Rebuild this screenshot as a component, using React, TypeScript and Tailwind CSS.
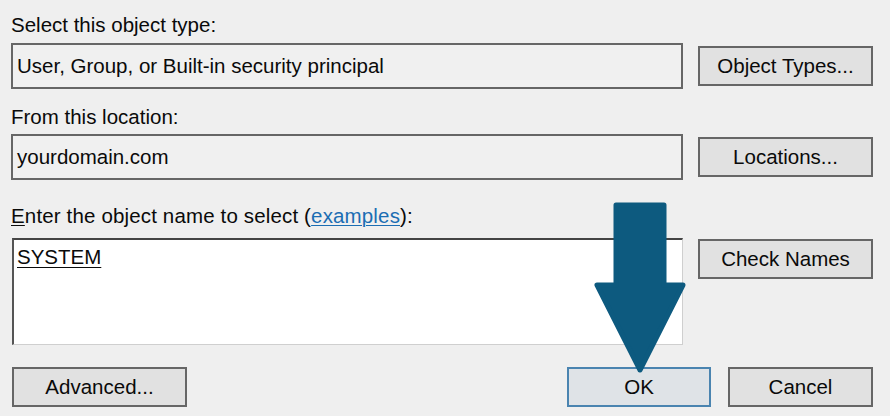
import React from "react";

const font = { fontFamily: '"Liberation Sans", Arial, sans-serif' };

function Btn({ children, primary = false, className = "" }: { children: React.ReactNode; primary?: boolean; className?: string }) {
  return (
    <div
      className={
        "flex h-[40px] items-center justify-center border-2 text-[20.5px] leading-[24px] text-[#0a0a0a] " +
        (primary ? "border-[#4a84b0] bg-[#dfe3e7] " : "border-[#666] bg-[#e1e1e1] ") +
        className
      }
    >
      {children}
    </div>
  );
}

export default function App() {
  return (
    <div className="relative h-[416px] w-[890px] overflow-hidden bg-[#efefef] text-[#0a0a0a]" style={font}>
      <div className="flex flex-col pl-[11px] pt-[13px] text-[20.5px] leading-[24px]">
        <div className="h-[24px]">Select this object type:</div>
        <div className="mt-[6px] flex items-center gap-[15px]">
          <div className="flex h-[46px] w-[672px] items-center border-2 border-[#666] bg-[#f0f0f0] pl-[4px]">
            User, Group, or Built-in security principal
          </div>
          <Btn className="w-[175px]">Object Types...</Btn>
        </div>

        <div className="mt-[16px] h-[24px]">From this location:</div>
        <div className="mt-[5px] flex items-center gap-[15px]">
          <div className="flex h-[46px] w-[672px] items-center border-2 border-[#666] bg-[#f0f0f0] pl-[4px]">
            yourdomain.com
          </div>
          <Btn className="w-[175px]">Locations...</Btn>
        </div>

        <div className="mt-[24px] h-[24px] tracking-[0.15px]">
          <span className="underline decoration-1 underline-offset-2">E</span>nter the object name to select (
          <span className="text-[#1b6db3] underline decoration-1 underline-offset-2">examples</span>):
        </div>
        <div className="mt-[10px] flex items-start gap-[15px]">
          <div className="ml-[1px] h-[107px] w-[671px] border-b border-l-2 border-r border-t-2 border-b-[#cfcfcf] border-l-[#555] border-r-[#cfcfcf] border-t-[#444] bg-white pl-[3px] pt-[5px]">
            <span className="underline decoration-1 underline-offset-[3px]">SYSTEM</span>
          </div>
          <Btn className="mt-[1px] w-[175px]">Check Names</Btn>
        </div>

        <div className="mt-[22px] flex w-[862px] items-center justify-between">
          <Btn className="ml-[1px] w-[175px]">Advanced...</Btn>
          <div className="flex gap-[17px]">
            <Btn primary className="w-[144px]">OK</Btn>
            <Btn className="w-[145px]">Cancel</Btn>
          </div>
        </div>
      </div>

      <svg className="absolute left-[594px] top-[202px]" width="92" height="172" viewBox="0 0 92 172">
        <path
          d="M22 3 H70 V83 H89 L46 168 L3 83 H22 Z"
          fill="#0d5a7f"
          stroke="#0d5a7f"
          strokeWidth="5"
          strokeLinejoin="round"
        />
      </svg>
    </div>
  );
}
